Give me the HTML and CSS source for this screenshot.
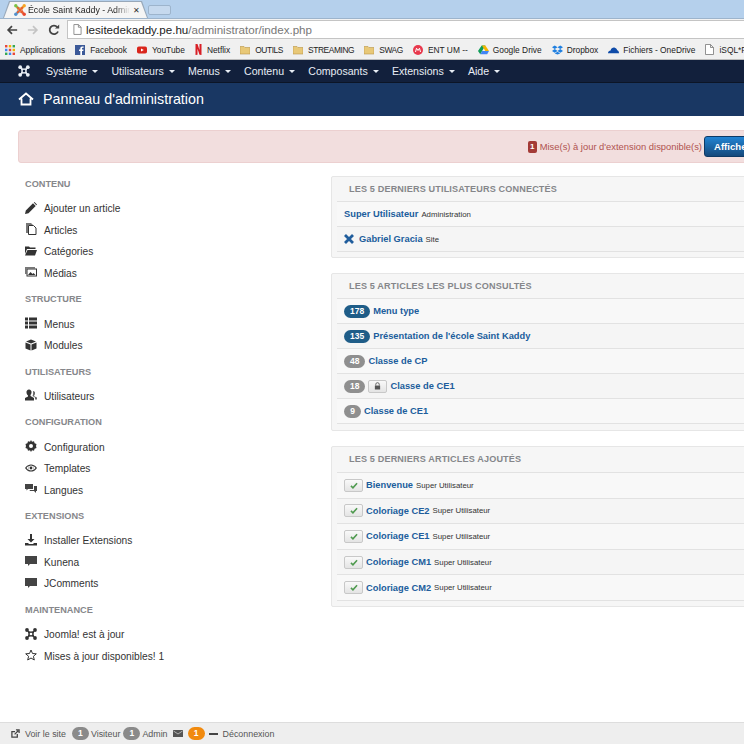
FILE: index.html
```html
<!DOCTYPE html>
<html lang="fr">
<head>
<meta charset="utf-8">
<title>École Saint Kaddy - Administration</title>
<link rel="stylesheet" href="styles.css">
</head>
<body>
<div class="page">
  <div class="tabstrip">
    <div class="tab">
      <div class="tab-inner">
        <svg class="fav" viewBox="0 0 12 12"><path d="M1 1 6 3.500 3.500 6z" fill="#7ac143"/><path d="M11 1 6 3.500 8.500 6z" fill="#f5a623"/><path d="M1 11 6 8.500 3.500 6z" fill="#5091cd"/><path d="M11 11 6 8.500 8.500 6z" fill="#e8482f"/><path d="M3 3 9 9M9 3 3 9" stroke="#e8622f" stroke-width="1.800"/><circle cx="1.800" cy="1.800" r="1.700" fill="#7ac143"/><circle cx="10.200" cy="1.800" r="1.700" fill="#f5a623"/><circle cx="1.800" cy="10.200" r="1.700" fill="#5091cd"/><circle cx="10.200" cy="10.200" r="1.700" fill="#e8482f"/></svg>
        <span class="tab-title">École Saint Kaddy - Admin</span>
        <span class="tab-close">✕</span>
      </div>
    </div>
    <div class="newtab"></div>
  </div>
  <div class="toolbar">
    <svg class="nav-ico" viewBox="0 0 14 12"><path d="M13 6H3M7 1.500 2.500 6 7 10.500" fill="none" stroke="#444" stroke-width="2"/></svg>
    <svg class="nav-ico" viewBox="0 0 14 12"><path d="M1 6h10M7 1.500 11.500 6 7 10.500" fill="none" stroke="#c4c4c4" stroke-width="2"/></svg>
    <svg class="nav-ico" viewBox="0 0 12 12"><path d="M10 7.500A4.300 4.300 0 1 1 9.200 3" fill="none" stroke="#444" stroke-width="1.800"/><path d="M7 4.600h4.200V.4z" fill="#444"/></svg>
    <div class="omnibox">
      <svg class="doc" viewBox="0 0 10 12"><path d="M1 .5h5l3 3v8H1zM6 .5v3h3" fill="#fff" stroke="#888"/></svg>
      <span class="url-host">lesitedekaddy.pe.hu</span><span class="url-path">/administrator/index.php</span>
    </div>
  </div>
  <div class="bookmarks">
    <span class="bm"><svg class="bi" viewBox="0 0 10 10"><g fill="#e8483b"><rect width="2.400" height="2.400"/><rect x="3.800" width="2.400" height="2.400" fill="#f4b400"/><rect x="7.600" width="2.400" height="2.400" fill="#34a853"/><rect y="3.800" width="2.400" height="2.400" fill="#4285f4"/><rect x="3.800" y="3.800" width="2.400" height="2.400"/><rect x="7.600" y="3.800" width="2.400" height="2.400" fill="#f4b400"/><rect y="7.600" width="2.400" height="2.400" fill="#34a853"/><rect x="3.800" y="7.600" width="2.400" height="2.400" fill="#4285f4"/><rect x="7.600" y="7.600" width="2.400" height="2.400"/></g></svg>Applications</span>
    <span class="bm"><svg class="bi" viewBox="0 0 10 10"><rect width="10" height="10" fill="#3b5998"/><path d="M7 10V6h1.300l.2-1.500H7V3.600c0-.5.200-.8.800-.8h.8V1.400H7.400C6 1.400 5.300 2.300 5.300 3.500v1H4V6h1.300v4z" fill="#fff"/></svg>Facebook</span>
    <span class="bm"><svg class="bi" viewBox="0 0 10 10"><rect y="1.500" width="10" height="7" rx="1.800" fill="#d9261c"/><path d="M4 3.400 6.800 5 4 6.600z" fill="#fff"/></svg>YouTube</span>
    <span class="bm"><svg class="bi-n" viewBox="0 0 7 11"><path d="M.5 0h2l2 6V0h2v11l-2-.3-2-6v6L.5 11z" fill="#d81f26"/></svg>Netflix</span>
    <span class="bm bm-caps"><svg class="bi" viewBox="0 0 10 10"><path d="M0 1.500h4l1 1h5V9H0z" fill="#e8c877" stroke="#b8954a" stroke-width=".6"/></svg>OUTILS</span>
    <span class="bm bm-caps"><svg class="bi" viewBox="0 0 10 10"><path d="M0 1.500h4l1 1h5V9H0z" fill="#e8c877" stroke="#b8954a" stroke-width=".6"/></svg>STREAMING</span>
    <span class="bm bm-caps"><svg class="bi" viewBox="0 0 10 10"><path d="M0 1.500h4l1 1h5V9H0z" fill="#e8c877" stroke="#b8954a" stroke-width=".6"/></svg>SWAG</span>
    <span class="bm"><svg class="bi" viewBox="0 0 10 10"><circle cx="5" cy="5" r="5" fill="#e8394d"/><path d="M2.500 7 3.500 3.200 5 5.500 6.500 3.200 7.500 7" fill="none" stroke="#fff"/></svg>ENT UM --</span>
    <span class="bm bm-wide"><svg class="bi-w" viewBox="0 0 12 10"><path d="M4 0h4L4.500 6 2.500 9.500 0 6z" fill="#0f9d58"/><path d="M8 0l4 6H8L4.300 0z" fill="#f4b400"/><path d="M12 6 10 9.500H2.500L4.500 6z" fill="#4285f4"/></svg>Google Drive</span>
    <span class="bm bm-wide"><svg class="bi-w" viewBox="0 0 12 10"><path d="M3 0 6 2 3 4 0 2zM9 0l3 2-3 2-3-2zM3 4l3 2-3 2-3-2zM9 4l3 2-3 2-3-2zM6 6.800 9 8.800 6 10 3 8.800z" fill="#1f7fe0"/></svg>Dropbox</span>
    <span class="bm bm-wide"><svg class="bi-w" viewBox="0 0 12 10"><path d="M0 8.500C0 6.500 1.500 5.500 2.800 5.500 3.500 3 5.500 2 7.500 2.500 9 3 9.800 4.300 10 5.200 11.200 5.500 12 6.500 12 8.500z" fill="#0f4ba8"/></svg>Fichiers - OneDrive</span>
    <span class="bm"><svg class="bi-d" viewBox="0 0 9 11"><path d="M.5.500h5l3 3v7H.500zM5.500.500v3h3" fill="#fff" stroke="#777" stroke-width=".8"/></svg>iSQL*P</span>
  </div>

  <nav class="navbar">
    <svg class="jlogo" viewBox="0 0 12 12"><path d="M2.500 2.500Q6 4.300 9.500 2.500 7.700 6 9.500 9.500 6 7.700 2.500 9.500 4.300 6 2.500 2.500Z" fill="#e8edf5"/><circle cx="6" cy="6" r="1.300" fill="#12203c"/><circle cx="2.200" cy="2.200" r="1.900" fill="#e8edf5"/><circle cx="9.800" cy="2.200" r="1.900" fill="#e8edf5"/><circle cx="2.200" cy="9.800" r="1.900" fill="#e8edf5"/><circle cx="9.800" cy="9.800" r="1.900" fill="#e8edf5"/></svg>
    <span class="menu">Système</span>
    <span class="menu">Utilisateurs</span>
    <span class="menu">Menus</span>
    <span class="menu">Contenu</span>
    <span class="menu">Composants</span>
    <span class="menu">Extensions</span>
    <span class="menu">Aide</span>
  </nav>
  <header class="subhead">
    <svg class="home" viewBox="0 0 16 14"><path d="M1 7.500 8 1.500 15 7.500M3.500 6.500V12.500H12.500V6.500" fill="none" stroke="#fff" stroke-width="1.800"/></svg>
    <h1 class="title">Panneau d'administration</h1>
  </header>

  <main class="main">
    <div class="alert">
      <span class="alert-count">1</span>
      <span class="alert-text">Mise(s) à jour d'extension disponible(s)</span>
      <span class="alert-btn">Afficher</span>
    </div>
    <div class="columns">
      <aside class="sidebar">
        <h2 class="side-head">CONTENU</h2>
        <div class="side-item"><svg class="si" viewBox="0 0 12 12"><path d="M0 12l.8-3.500L8 1.300 10.700 4 3.500 11.200zM8.800.500l.700-.500 2.500 2.500-.700.700z" fill="#333"/></svg>Ajouter un article</div>
        <div class="side-item"><svg class="si" viewBox="0 0 12 12"><path d="M1 0h5l2 2H3v8H1z" fill="#777"/><path d="M3.500 2.500h5l2.500 2.500v6.500H3.500z" fill="#fff" stroke="#333"/></svg>Articles</div>
        <div class="side-item"><svg class="si" viewBox="0 0 12 12"><path d="M0 1.500h4l1 1h5.500v1.500H2L0 9zM2.500 5H12L10 10.500H0z" fill="#333"/></svg>Catégories</div>
        <div class="side-item"><svg class="si" viewBox="0 0 12 12"><path d="M0 1h10v1.500H1.500V8H0z" fill="#777"/><rect x="2" y="3" width="9.500" height="7" fill="#fff" stroke="#333"/><path d="M3 9l2.500-3 2 2 1-1 2 2z" fill="#333"/></svg>Médias</div>

        <h2 class="side-head">STRUCTURE</h2>
        <div class="side-item"><svg class="si" viewBox="0 0 12 12"><path d="M0 .500h3v3H0zM4 .500h8v3H4zM0 4.500h3v3H0zM4 4.500h8v3H4zM0 8.500h3v3H0zM4 8.500h8v3H4z" fill="#333"/></svg>Menus</div>
        <div class="side-item"><svg class="si" viewBox="0 0 12 12"><path d="M6 .500 11 2.500 6 4.500 1 2.500zM.5 3.500 5.500 5.500V11.500L.5 9.500zM11.500 3.500 6.500 5.500V11.500L11.500 9.500z" fill="#333"/></svg>Modules</div>

        <h2 class="side-head">UTILISATEURS</h2>
        <div class="side-item"><svg class="si" viewBox="0 0 12 12"><path d="M4 .500a2.500 2.500 0 0 1 2.500 3c0 1.200-.7 2-1 2.500v1L9 9v2.500H0V9l3-1.500v-1c-.5-.5-1.500-1.500-1.500-3A2.500 2.500 0 0 1 4 .500z" fill="#333"/><path d="M8 2a2 2 0 0 1 2 2.500c0 1-.5 1.500-.8 2v.700L12 8.500v2h-2V8.500L7.500 7c.5-1 .8-2 .5-5z" fill="#666"/></svg>Utilisateurs</div>

        <h2 class="side-head">CONFIGURATION</h2>
        <div class="side-item"><svg class="si" viewBox="0 0 12 12"><path d="M6 0l1 1.800 2-.6.600 2L11.500 4 11 6l.5 2-1.900.8-.6 2-2-.6L6 12l-1-1.800-2 .6-.6-2L.5 8 1 6 .5 4l1.900-.8.600-2 2 .6zM6 4a2 2 0 1 0 0 4 2 2 0 0 0 0-4z" fill="#333" fill-rule="evenodd"/></svg>Configuration</div>
        <div class="side-item"><svg class="si" viewBox="0 0 12 12"><path d="M0 6C2 3 4 2.500 6 2.500S10 3 12 6C10 9 8 9.500 6 9.500S2 9 0 6zM6 3.500a2.500 2.500 0 1 0 0 5 2.500 2.500 0 0 0 0-5zM1.500 6C2.500 7.300 3.300 7.900 4 8.200 3 7 3 5 4 3.800 3.300 4.100 2.500 4.700 1.500 6zM8 3.800C9 5 9 7 8 8.200 8.700 7.900 9.500 7.300 10.500 6 9.500 4.700 8.700 4.100 8 3.800z" fill="#333" fill-rule="evenodd"/><circle cx="6" cy="6" r="1.400" fill="#333"/></svg>Templates</div>
        <div class="side-item"><svg class="si" viewBox="0 0 12 12"><path d="M0 1h8v5H3L1.500 7.500V6H0z" fill="#444"/><path d="M9 3h3v5h-1v2L9 8H5L4.500 7H9z" fill="#444"/></svg>Langues</div>

        <h2 class="side-head">EXTENSIONS</h2>
        <div class="side-item"><svg class="si" viewBox="0 0 12 12"><path d="M5 0h2v5h2.500L6 8.500 2.500 5H5zM0 9h3l1 1h4l1-1h3v2.500H0z" fill="#333"/></svg>Installer Extensions</div>
        <div class="side-item"><svg class="si" viewBox="0 0 12 12"><path d="M0 1h12v8H5L3 11V9H0z" fill="#444"/></svg>Kunena</div>
        <div class="side-item"><svg class="si" viewBox="0 0 12 12"><path d="M0 1h12v8H5L3 11V9H0z" fill="#444"/></svg>JComments</div>

        <h2 class="side-head">MAINTENANCE</h2>
        <div class="side-item"><svg class="si" viewBox="0 0 12 12"><path d="M2.500 2.500Q6 4.300 9.500 2.500 7.700 6 9.500 9.500 6 7.700 2.500 9.500 4.300 6 2.500 2.500Z" fill="#333"/><circle cx="6" cy="6" r="1.300" fill="#fff"/><circle cx="2" cy="2" r="1.900" fill="#333"/><circle cx="10" cy="2" r="1.900" fill="#333"/><circle cx="2" cy="10" r="1.900" fill="#333"/><circle cx="10" cy="10" r="1.900" fill="#333"/></svg>Joomla! est à jour</div>
        <div class="side-item"><svg class="si" viewBox="0 0 12 12"><path d="M6 1 7.500 4.500 11.300 4.800 8.400 7.300 9.300 11 6 9 2.700 11 3.600 7.300 .7 4.800 4.500 4.500z" fill="none" stroke="#333"/></svg>Mises à jour disponibles! 1</div>
      </aside>

      <section class="panels">
        <div class="panel panel-users">
          <h3 class="panel-head">LES 5 DERNIERS UTILISATEURS CONNECTÉS</h3>
          <div class="row"><a class="link">Super Utilisateur</a> <small class="note">Administration</small></div>
          <div class="row"><svg class="x" viewBox="0 0 10 10"><path d="M1 1 9 9M9 1 1 9" stroke="#205d9c" stroke-width="2.800"/></svg><a class="link">Gabriel Gracia</a> <small class="note">Site</small></div>
        </div>
        <div class="panel">
          <h3 class="panel-head">LES 5 ARTICLES LES PLUS CONSULTÉS</h3>
          <div class="row"><span class="badge blue">178</span><a class="link">Menu type</a></div>
          <div class="row"><span class="badge blue">135</span><a class="link">Présentation de l'école Saint Kaddy</a></div>
          <div class="row"><span class="badge">48</span><a class="link">Classe de CP</a></div>
          <div class="row"><span class="badge">18</span><span class="mini"><svg class="lock" viewBox="0 0 8 9"><path d="M2 4V2.700a2 2 0 0 1 4 0V4" fill="none" stroke="#555"/><rect x="1" y="4" width="6" height="4.500" fill="#555"/></svg></span><a class="link">Classe de CE1</a></div>
          <div class="row"><span class="badge">9</span><a class="link">Classe de CE1</a></div>
        </div>
        <div class="panel panel-latest">
          <h3 class="panel-head">LES 5 DERNIERS ARTICLES AJOUTÉS</h3>
          <div class="row"><span class="mini"><svg class="check" viewBox="0 0 9 8"><path d="M1 4.500 3.300 6.700 8 1.500" fill="none" stroke="#4f9a4f" stroke-width="1.800"/></svg></span><a class="link">Bienvenue</a> <small class="note">Super Utilisateur</small></div>
          <div class="row"><span class="mini"><svg class="check" viewBox="0 0 9 8"><path d="M1 4.500 3.300 6.700 8 1.500" fill="none" stroke="#4f9a4f" stroke-width="1.800"/></svg></span><a class="link">Coloriage CE2</a> <small class="note">Super Utilisateur</small></div>
          <div class="row"><span class="mini"><svg class="check" viewBox="0 0 9 8"><path d="M1 4.500 3.300 6.700 8 1.500" fill="none" stroke="#4f9a4f" stroke-width="1.800"/></svg></span><a class="link">Coloriage CE1</a> <small class="note">Super Utilisateur</small></div>
          <div class="row"><span class="mini"><svg class="check" viewBox="0 0 9 8"><path d="M1 4.500 3.300 6.700 8 1.500" fill="none" stroke="#4f9a4f" stroke-width="1.800"/></svg></span><a class="link">Coloriage CM1</a> <small class="note">Super Utilisateur</small></div>
          <div class="row"><span class="mini"><svg class="check" viewBox="0 0 9 8"><path d="M1 4.500 3.300 6.700 8 1.500" fill="none" stroke="#4f9a4f" stroke-width="1.800"/></svg></span><a class="link">Coloriage CM2</a> <small class="note">Super Utilisateur</small></div>
        </div>
      </section>
    </div>
  </main>

  <footer class="status">
    <svg class="st-ico" viewBox="0 0 10 10"><path d="M7 5.500V9H1V3h3.500" fill="none" stroke="#444" stroke-width="1.400"/><path d="M4 6 8 2M5.500 1H9v3.500" fill="none" stroke="#444" stroke-width="1.400"/></svg>
    <span class="st-text st-site">Voir le site</span>
    <span class="pill">1</span><span class="st-text st-tight">Visiteur</span>
    <span class="pill">1</span><span class="st-text st-tight">Admin</span>
    <svg class="st-mail" viewBox="0 0 10 7"><rect width="10" height="7" fill="#555"/><path d="M.5 1 5 4 9.500 1" fill="none" stroke="#ddd" stroke-width=".7"/></svg>
    <span class="pill orange">1</span>
    <span class="minus"></span>
    <span class="st-text">Déconnexion</span>
  </footer>
</div>
</body>
</html>
```

FILE: styles.css
```css
* { box-sizing: border-box; }
html, body { margin: 0; padding: 0; background: #fff; }
.page {
  width: 744px; height: 744px; overflow: hidden;
  display: flex; flex-direction: column;
  font-family: "Liberation Sans", Arial, sans-serif;
  color: #333;
}

/* browser chrome */
.tabstrip {
  height: 18px; flex: none; background: #b5d0ec;
  display: flex; align-items: flex-end; padding-left: 3px;
}
.tab {
  width: 145px; height: 17px; background: #98a8b9;
  clip-path: polygon(0 100%, 6px 0, calc(100% - 6px) 0, 100% 100%);
  padding: 1px 1px 0;
}
.tab-inner {
  height: 100%; background: #f5f5f5;
  clip-path: polygon(0 100%, 6px 0, calc(100% - 6px) 0, 100% 100%);
  display: flex; align-items: center; padding-left: 10px;
  font-size: 8.800px; color: #222;
}
.fav { width: 12px; height: 12px; margin-right: 2px; flex: none; }
.tab-title {
  width: 102px; flex: none; white-space: nowrap;
  -webkit-mask-image: linear-gradient(90deg, #000 85%, transparent);
  mask-image: linear-gradient(90deg, #000 85%, transparent);
}
.tab-close { margin-left: 3px; font-size: 8px; color: #333; flex: none; }
.newtab {
  width: 23px; height: 10px; margin: 0 0 3px 0;
  background: #c6d9ee; border: 1px solid #9db4cc;
  border-radius: 2px;
}
.toolbar {
  height: 22px; flex: none; background: #f2f2f2;
  display: flex; align-items: center; padding: 0 0 0 6px;
  border-top: 1px solid #9db4cc;
}
.nav-ico { width: 12px; height: 12px; margin-right: 9px; flex: none; }
.nav-ico:nth-child(3) { margin-right: 7px; }
.omnibox {
  flex: 1; height: 19px; background: #fff;
  border: 1px solid #c4c4c4; border-right: 0;
  display: flex; align-items: center; padding-left: 5px;
  font-size: 11.600px; white-space: nowrap;
}
.doc { width: 9px; height: 11px; margin-right: 4px; flex: none; }
.url-host { color: #222; }
.url-path { color: #777; }
.bookmarks {
  height: 20px; flex: none; background: #f0f0f0;
  border-bottom: 1px solid #bbb;
  display: flex; align-items: center; gap: 10px; padding-left: 5px;
  font-size: 8.400px; color: #222; white-space: nowrap; overflow: hidden;
}
.bm { display: flex; align-items: center; gap: 5px; flex: none; }
.bm-caps { letter-spacing: -.4px; }
.bm-wide { gap: 4px; }
.bi { width: 10px; height: 10px; flex: none; }
.bi-w { width: 11px; height: 10px; flex: none; }
.bi-n { width: 7px; height: 11px; flex: none; }
.bi-d { width: 9px; height: 11px; flex: none; }

/* joomla bars */
.navbar {
  height: 23px; flex: none; background: #12203c;
  border-bottom: 1px solid #0c1526;
  display: flex; align-items: center; padding-left: 18px;
  color: #e8edf5; font-size: 10.600px;
}
.jlogo { width: 12px; height: 12px; margin-right: 16px; flex: none; }
.menu { display: flex; align-items: center; margin-right: 13.200px; white-space: nowrap; }
.menu::after {
  content: ""; margin-left: 5px;
  border-top: 3px solid #e8edf5; border-left: 3px solid transparent; border-right: 3px solid transparent;
}
.subhead {
  height: 33px; flex: none; background: #193763;
  display: flex; align-items: center; padding: 0 0 2px 18px;
}
.home { width: 16px; height: 14px; margin-right: 9px; flex: none; }
.title { margin: 0; font-size: 14.300px; font-weight: 400; color: #fff; }

/* main */
.main { flex: 1; min-height: 0; padding: 14px 0 0 18px; }
.alert {
  width: 760px; height: 33px;
  background: #f2dede; border: 1px solid #ecd0d0; border-radius: 3px;
  display: flex; align-items: center; justify-content: flex-end;
  padding-right: 13px;
  font-size: 9.400px; color: #b0524f;
}
.alert-count {
  width: 9px; height: 12px; background: #a33a36; color: #fff; border-radius: 2px;
  font-size: 8px; font-weight: 700; text-align: center; line-height: 12px; margin-right: 3px;
}
.alert-text { white-space: nowrap; }
.alert-btn {
  width: 60px; height: 21px; margin-left: 2px; padding-left: 9px;
  background: linear-gradient(#2384d3, #15497c); border: 1px solid #0e3a66; border-radius: 3px;
  color: #fff; font-weight: 700; font-size: 9.600px; line-height: 19px;
}
.columns { display: flex; margin-top: 13px; }
.sidebar { width: 313px; flex: none; padding-left: 7px; }
.side-head {
  margin: 8.300px 0 7px; font-size: 9.200px; font-weight: 700; color: #86878b;
  height: 14px; line-height: 14px;
}
.side-head:first-child { margin-top: 1px; }
.side-item {
  height: 21.500px; display: flex; align-items: center;
  font-size: 10.200px; color: #333; white-space: nowrap;
}
.si { width: 12px; height: 12px; margin-right: 7px; flex: none; position: relative; top: -1px; }

/* panels */
.panels { width: 440px; flex: none; }
.panel {
  background: #f6f6f6; border: 1px solid #e6e6e6; border-radius: 2px;
  padding: 0 0 6px 5px; margin-bottom: 15px;
}
.panel-head {
  margin: 0; height: 24px; line-height: 24px; padding-left: 12px;
  font-size: 9.100px; font-weight: 700; color: #85868a; letter-spacing: .15px;
}
.row {
  height: 25px; display: flex; align-items: center; gap: 3px;
  border-top: 1px solid #e2e2e2; padding-left: 7px;
  background: #f8f8f8; white-space: nowrap;
}
.row:last-child { border-bottom: 1px solid #e2e2e2; height: 26px; }
.row:nth-child(odd) { background: #f5f5f5; }
.panel-users { padding-bottom: 5px; }
.panel-latest { padding-bottom: 5px; }
.panel-latest .panel-head { height: 25px; }
.panel-latest .row { height: 25.600px; }
.panel-latest .row:last-child { height: 26.600px; }
.link { font-size: 9.300px; font-weight: 700; color: #205d9c; }
.note { font-size: 7.800px; color: #333; margin-left: 0; }
.x { width: 10px; height: 10px; margin-right: 2px; flex: none; }
.badge {
  height: 13px; min-width: 17px; padding: 0 6px; border-radius: 7px;
  background: #8f8f8f; color: #fff; font-size: 8.500px; font-weight: 700; line-height: 13px; text-align: center;
}
.badge.blue { background: #1f5d88; }
.mini {
  width: 19px; height: 13px; background: linear-gradient(#f9f9f9, #e4e4e4);
  border: 1px solid #c8c8c8; border-radius: 2px;
  display: flex; align-items: center; justify-content: center; flex: none;
}
.lock { width: 7px; height: 8px; }
.check { width: 8px; height: 7px; }

/* status */
.status {
  height: 22px; flex: none; background: #eee; border-top: 1px solid #ddd;
  display: flex; align-items: center; padding-left: 11px;
  font-size: 8.900px; color: #555;
}
.st-ico { width: 9px; height: 9px; flex: none; margin-right: 5px; }
.st-text { white-space: nowrap; }
.st-site { margin-right: 6px; }
.st-tight { margin-left: 2px; margin-right: 3px; }
.pill {
  width: 17px; height: 13px; border-radius: 7px; background: #8a8a8a; color: #fff;
  font-size: 8.500px; font-weight: 700; line-height: 13px; text-align: center; flex: none;
}
.pill.orange { background: #f18a0e; }
.st-mail { width: 10px; height: 7px; margin: 0 5px 0 2px; flex: none; }
.minus { width: 9px; height: 2px; background: #444; margin: 0 5px 0 4px; flex: none; }
```
